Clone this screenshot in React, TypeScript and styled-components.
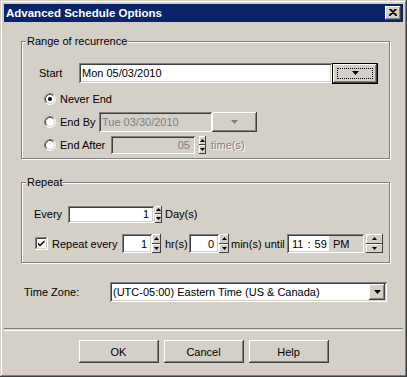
import React from 'react';
import styled, { createGlobalStyle, css } from 'styled-components';

const face = '#d4d0c8';
const shadow = '#808080';
const dark = '#404040';

const GlobalStyle = createGlobalStyle`
  body {
    margin: 0;
    background: ${face};
  }
`;

const raised = css`
  box-shadow: inset -1px -1px ${dark}, inset 1px 1px #fff, inset -2px -2px ${shadow}, inset 2px 2px ${face};
`;

const thinRaised = css`
  box-shadow: inset -1px -1px ${dark}, inset 1px 1px #fff;
`;

const sunken = css`
  box-shadow: inset 1px 1px ${shadow}, inset -1px -1px #fff, inset 2px 2px ${dark}, inset -2px -2px ${face};
`;

const Window = styled.div`
  box-sizing: border-box;
  width: 407px;
  height: 377px;
  padding: 4px;
  display: flex;
  flex-direction: column;
  background: ${face};
  box-shadow: inset -1px -1px ${dark}, inset 1px 1px ${face}, inset -2px -2px ${shadow}, inset 2px 2px #fff;
  font-family: 'Liberation Sans', Arial, sans-serif;
  font-size: 11px;
  color: #000;
`;

const TitleBar = styled.div`
  height: 18px;
  display: flex;
  align-items: center;
  justify-content: space-between;
  padding: 0 2px;
  background: #0a246a;
  color: #fff;
  font-weight: bold;
  font-size: 11.5px;
`;

const CloseButton = styled.div`
  width: 16px;
  height: 14px;
  margin-top: -1px;
  display: flex;
  align-items: center;
  justify-content: center;
  background: ${face};
  ${raised}
`;

const Group = styled.div<{ $top: number; $padTop: number; $padBottom: number }>`
  margin: ${p => p.$top}px 13px 0 17px;
  padding: 0 0 ${p => p.$padBottom}px;
  border: 1px solid ${shadow};
  box-shadow: inset 1px 1px #fff, 1px 1px #fff;
  & > div:nth-child(2) {
    margin-top: ${p => p.$padTop}px;
  }
`;

const Legend = styled.div`
  display: table;
  margin: -7px 0 0 4px;
  padding: 0 1px;
  line-height: 13px;
  background: ${face};
`;

const Row = styled.div<{ $h: number; $gap?: number; $left: number }>`
  display: flex;
  align-items: center;
  height: ${p => p.$h}px;
  margin-top: ${p => p.$gap ?? 0}px;
  margin-left: ${p => p.$left}px;
`;

const Label = styled.div<{ $w?: number; $disabled?: boolean }>`
  flex: none;
  width: ${p => (p.$w ? `${p.$w}px` : 'auto')};
  white-space: nowrap;
  color: ${p => (p.$disabled ? shadow : '#000')};
  text-shadow: ${p => (p.$disabled ? '1px 1px #fff' : 'none')};
`;

const Field = styled.div<{ $w: number; $h?: number; $disabled?: boolean; $right?: boolean }>`
  box-sizing: border-box;
  flex: none;
  width: ${p => p.$w}px;
  height: ${p => p.$h ?? 20}px;
  padding: 0 ${p => (p.$right ? 5 : 2)}px 0 3px;
  display: flex;
  align-items: center;
  justify-content: ${p => (p.$right ? 'flex-end' : 'flex-start')};
  white-space: nowrap;
  background: ${p => (p.$disabled ? face : '#fff')};
  color: ${p => (p.$disabled ? shadow : '#000')};
  ${sunken}
`;

const TimeField = styled(Field)`
  padding: 2px 0 2px 2px;
  background: ${face};
`;

const TimeValue = styled.div`
  box-sizing: border-box;
  width: 40px;
  height: 100%;
  display: flex;
  align-items: center;
  padding-left: 3px;
  background: #fff;
  word-spacing: 1px;
`;

const TimeSuffix = styled.span`
  padding-left: 4px;
`;

const DropButton = styled.div<{ $focused?: boolean; $w: number; $h: number }>`
  box-sizing: border-box;
  flex: none;
  width: ${p => p.$w}px;
  height: ${p => p.$h}px;
  display: flex;
  align-items: center;
  justify-content: center;
  background: ${face};
  ${raised}
  ${p =>
    p.$focused &&
    css`
      border: 1px solid #000;
      box-shadow: inset -1px -1px ${dark}, inset 1px 1px #fff, inset -2px -2px ${shadow};
    `}
`;

const FocusRing = styled.div`
  box-sizing: border-box;
  width: 36px;
  height: 11px;
  border: 1px dotted #000;
  display: flex;
  align-items: center;
  justify-content: center;
`;

const Combo = styled(Field)`
  padding-right: 2px;
  justify-content: space-between;
`;

const Spin = styled.div<{ $w: number; $h: number; $left: number; $right: number }>`
  flex: none;
  display: flex;
  flex-direction: column;
  width: ${p => p.$w}px;
  height: ${p => p.$h}px;
  margin: 0 ${p => p.$right}px 0 ${p => p.$left}px;
`;

const SpinButton = styled.div`
  flex: 1;
  display: flex;
  align-items: center;
  justify-content: center;
  background: ${face};
  ${thinRaised}
`;

const RadioLabel = styled.div<{ $w?: number }>`
  flex: none;
  display: flex;
  align-items: center;
  gap: 4px;
  width: ${p => (p.$w ? `${p.$w}px` : 'auto')};
`;

const TimeZoneRow = styled.div`
  display: flex;
  align-items: center;
  height: 20px;
  margin: 19px 0 0 20px;
`;

const Separator = styled.div`
  height: 1px;
  margin-top: 26px;
  border-top: 1px solid ${shadow};
  border-bottom: 1px solid #fff;
`;

const ButtonBar = styled.div`
  display: flex;
  justify-content: center;
  gap: 5px;
  margin-top: 9px;
`;

const Button = styled.div`
  box-sizing: border-box;
  width: 80px;
  height: 23px;
  display: flex;
  align-items: center;
  justify-content: center;
  background: ${face};
  ${raised}
`;

const Arrow = ({ color = '#000', w = 7 }: { color?: string; w?: number }) => (
  <svg width={w} height={Math.ceil(w / 2)} viewBox={`0 0 ${w} ${Math.ceil(w / 2)}`}>
    <polygon points={`0,0 ${w},0 ${w / 2},${Math.ceil(w / 2)}`} fill={color} />
  </svg>
);

const TinyArrow = ({ up }: { up?: boolean }) => (
  <svg width="5" height="3" viewBox="0 0 5 3">
    <polygon points={up ? '2.5,0 5,3 0,3' : '0,0 5,0 2.5,3'} fill="#000" />
  </svg>
);

interface SpinnerProps {
  w: number;
  h: number;
  left?: number;
  right?: number;
}

const Spinner = ({ w, h, left = 2, right = 3 }: SpinnerProps) => (
  <Spin $w={w} $h={h} $left={left} $right={right}>
    <SpinButton>
      <TinyArrow up />
    </SpinButton>
    <SpinButton>
      <TinyArrow />
    </SpinButton>
  </Spin>
);

const Radio = ({ checked }: { checked?: boolean }) => (
  <svg width="12" height="12" viewBox="0 0 12 12">
    <circle cx="6" cy="6" r="5" fill="#fff" />
    <path d="M2.11 9.89 A5.5 5.5 0 0 1 9.89 2.11" fill="none" stroke={shadow} />
    <path d="M9.89 2.11 A5.5 5.5 0 0 1 2.11 9.89" fill="none" stroke="#fff" />
    <path d="M2.82 9.18 A4.5 4.5 0 0 1 9.18 2.82" fill="none" stroke={dark} />
    <path d="M9.18 2.82 A4.5 4.5 0 0 1 2.82 9.18" fill="none" stroke={face} />
    {checked && <circle cx="6" cy="6" r="2" fill="#000" />}
  </svg>
);

const CheckBox = () => (
  <svg width="13" height="13" viewBox="0 0 13 13">
    <rect x="0" y="0" width="13" height="13" fill="#fff" />
    <path d="M0.5 12 V0.5 H12" fill="none" stroke={shadow} />
    <path d="M1.5 11 V1.5 H11" fill="none" stroke={dark} />
    <path d="M0 12.5 H12.5 V0" fill="none" stroke="#fff" />
    <path d="M1 11.5 H11.5 V1" fill="none" stroke={face} />
    <path d="M3 5.5 L5 7.5 L9.5 3 V5 L5 9.5 L3 7.5 Z" fill="#000" />
  </svg>
);

const CloseGlyph = () => (
  <svg width="8" height="7" viewBox="0 0 8 7">
    <path d="M0.5 0 L7.5 7 M1.5 0 L8 6.5 M7.5 0 L0.5 7 M6.5 0 L0 6.5" stroke="#000" strokeWidth="1.1" />
  </svg>
);

export default function App() {
  return (
    <>
      <GlobalStyle />
      <Window>
        <TitleBar>
          <span>Advanced Schedule Options</span>
          <CloseButton>
            <CloseGlyph />
          </CloseButton>
        </TitleBar>

        <Group $top={19} $padTop={15} $padBottom={3}>
          <Legend>Range of recurrence</Legend>
          <Row $h={20} $left={17}>
            <Label $w={40}>Start</Label>
            <Field $w={253}>Mon 05/03/2010</Field>
            <DropButton $w={46} $h={21} $focused>
              <FocusRing>
                <Arrow />
              </FocusRing>
            </DropButton>
          </Row>
          <Row $h={20} $gap={6} $left={22}>
            <RadioLabel>
              <Radio checked />
              Never End
            </RadioLabel>
          </Row>
          <Row $h={20} $gap={3} $left={22}>
            <RadioLabel $w={55}>
              <Radio />
              End By
            </RadioLabel>
            <Field $w={113} $disabled>
              Tue 03/30/2010
            </Field>
            <DropButton $w={45} $h={20}>
              <Arrow color={shadow} />
            </DropButton>
          </Row>
          <Row $h={20} $gap={3} $left={22}>
            <RadioLabel $w={67}>
              <Radio />
              End After
            </RadioLabel>
            <Field $w={84} $h={18} $disabled $right>
              05
            </Field>
            <Spinner w={7} h={18} left={4} right={5} />
            <Label $disabled>time(s)</Label>
          </Row>
        </Group>

        <Group $top={23} $padTop={16} $padBottom={9}>
          <Legend>Repeat</Legend>
          <Row $h={18} $left={12}>
            <Label $w={34}>Every</Label>
            <Field $w={86} $h={17} $right>
              1
            </Field>
            <Spinner w={7} h={17} left={1} right={3} />
            <Label>Day(s)</Label>
          </Row>
          <Row $h={19} $gap={11} $left={13}>
            <RadioLabel $w={87}>
              <CheckBox />
              Repeat every
            </RadioLabel>
            <Field $w={30} $h={19} $right>
              1
            </Field>
            <Spinner w={9} h={19} left={0} right={4} />
            <Label $w={24}>hr(s)</Label>
            <Field $w={30} $h={19} $right>
              0
            </Field>
            <Spinner w={10} h={19} left={0} right={2} />
            <Label $w={56}>min(s) until</Label>
            <TimeField $w={77} $h={19}>
              <TimeValue>11 : 59</TimeValue>
              <TimeSuffix>PM</TimeSuffix>
            </TimeField>
            <Spinner w={17} h={19} left={2} right={0} />
          </Row>
        </Group>

        <TimeZoneRow>
          <Label $w={86}>Time Zone:</Label>
          <Combo $w={277}>
            (UTC-05:00) Eastern Time (US &amp; Canada)
            <DropButton $w={16} $h={16}>
              <Arrow color="#000" />
            </DropButton>
          </Combo>
        </TimeZoneRow>

        <Separator />

        <ButtonBar>
          <Button>OK</Button>
          <Button>Cancel</Button>
          <Button>Help</Button>
        </ButtonBar>
      </Window>
    </>
  );
}
